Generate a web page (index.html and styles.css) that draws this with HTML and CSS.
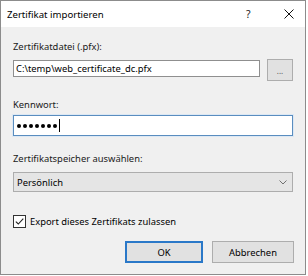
FILE: index.html
```html
<!DOCTYPE html>
<html lang="de">
<head>
    <meta charset="UTF-8">
    <title>Zertifikat importieren</title>
    <link rel="stylesheet" href="styles.css">
</head>
<body>
    <div class="window">
        <div class="titlebar">
            <span class="title">Zertifikat importieren</span>
            <span class="help">?</span>
            <span class="close">
                <svg width="10" height="10" viewBox="0 0 10 10">
                    <path d="M0.5 0.5 L9.5 9.5 M9.5 0.5 L0.5 9.5" stroke="#111" stroke-width="1" fill="none"/>
                </svg>
            </span>
        </div>

        <div class="content">
            <div class="label first">Zertifikatdatei (.pfx):</div>
            <div class="file-row">
                <div class="textbox file">C:\temp\web_certificate_dc.pfx</div>
                <div class="button browse">...</div>
            </div>

            <div class="label">Kennwort:</div>
            <div class="textbox password focused">
                <span class="dot"></span><span class="dot"></span><span class="dot"></span><span class="dot"></span><span class="dot"></span><span class="dot"></span><span class="dot"></span>
                <span class="caret"></span>
            </div>

            <div class="label store">Zertifikatspeicher auswählen:</div>
            <div class="combo">
                <span>Persönlich</span>
                <svg width="8" height="5" viewBox="0 0 8 5">
                    <path d="M0.5 0.5 L4 4 L7.5 0.5" stroke="#707070" stroke-width="1" fill="none"/>
                </svg>
            </div>

            <div class="check-row">
                <span class="checkbox">
                    <svg width="11" height="11" viewBox="0 0 11 11">
                        <path d="M1.8 5.6 L4.3 8 L9.3 2.6" stroke="#222" stroke-width="1.1" fill="none"/>
                    </svg>
                </span>
                <span>Export dieses Zertifikats zulassen</span>
            </div>

            <div class="actions">
                <div class="button default">OK</div>
                <div class="button">Abbrechen</div>
            </div>
        </div>
    </div>
</body>
</html>
```

FILE: styles.css
```css
* {
    margin: 0;
    padding: 0;
    box-sizing: border-box;
}

body {
    font-family: "Noto Sans", Arial, sans-serif;
    font-size: 9.4px;
    line-height: 15px;
    color: #1a1a1a;
    background: #ffffff;
}

.window {
    width: 306px;
    height: 275px;
    border: 1px solid #8c8c8c;
    background: #f0f0f0;
}

.titlebar {
    height: 26px;
    background: #ffffff;
    display: flex;
    align-items: center;
    padding-left: 6px;
}

.title {
    flex: 1;
    font-size: 9.6px;
    color: #000;
}

.help {
    width: 12px;
    margin-right: 26px;
    font-size: 10.5px;
    color: #222;
}

.close {
    display: flex;
    margin-right: 11px;
}

.content {
    padding: 0 12px 0 12px;
}

.label {
    height: 15px;
    margin-top: 16px;
}

.label.first {
    margin-top: 12px;
}

.label.store {
    margin-top: 15px;
}

.file-row {
    display: flex;
    align-items: flex-start;
    margin-top: 6px;
}

.textbox {
    height: 17px;
    background: #ffffff;
    border: 1px solid #8f8f8f;
    padding-left: 2px;
    line-height: 15px;
    color: #000;
}

.textbox.file {
    width: 247px;
}

.password {
    height: 21px;
    margin-top: 3px;
    display: flex;
    align-items: center;
    gap: 2px;
    padding-left: 3px;
}

.focused {
    border-color: #5a8dbf;
    box-shadow: 0 0 0 1px #dce8f4;
}

.dot {
    width: 4px;
    height: 4px;
    border-radius: 50%;
    background: #000;
}

.caret {
    width: 1px;
    height: 13px;
    background: #000;
}

.combo {
    height: 20px;
    margin-top: 6px;
    background: #e5e5e5;
    border: 1px solid #adadad;
    display: flex;
    align-items: center;
    justify-content: space-between;
    padding: 0 5px 0 3px;
    color: #000;
}

.check-row {
    display: flex;
    align-items: center;
    height: 13px;
    margin-top: 23px;
    gap: 4px;
    color: #000;
}

.checkbox {
    width: 13px;
    height: 13px;
    border: 1px solid #333;
    background: #fff;
    display: flex;
}

.actions {
    display: flex;
    justify-content: flex-end;
    gap: 9px;
    margin-top: 13px;
    margin-right: -1px;
}

.button {
    width: 82px;
    height: 22px;
    background: #e1e1e1;
    border: 1px solid #adadad;
    display: flex;
    align-items: center;
    justify-content: center;
    color: #000;
}

.button.default {
    width: 78px;
    border: 2px solid #2a78c8;
}

.button.browse {
    width: 26px;
    margin-left: 7px;
    margin-top: -1px;
    align-items: flex-end;
    padding-bottom: 5px;
    font-size: 8px;
    line-height: 8px;
    color: #555;
}
```
